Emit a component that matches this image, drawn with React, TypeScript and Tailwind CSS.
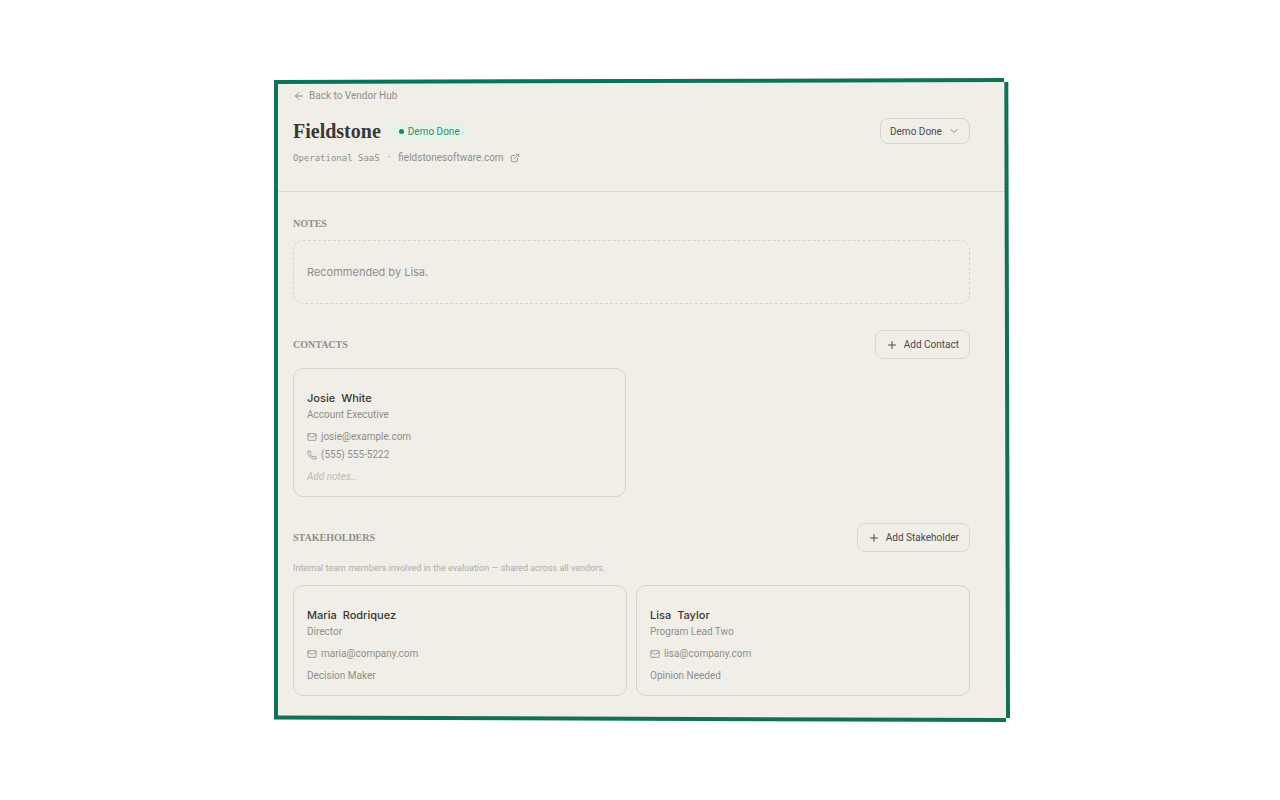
import { useState } from 'react';
import { ArrowLeft, ChevronDown, ExternalLink, Mail, Phone, Plus } from 'lucide-react';

interface Person {
  first: string;
  last: string;
  role: string;
  email: string;
  phone?: string;
  involvement?: string;
}

const contacts: Person[] = [
  {
    first: 'Josie',
    last: 'White',
    role: 'Account Executive',
    email: 'josie@example.com',
    phone: '(555) 555-5222',
  },
];

const stakeholders: Person[] = [
  {
    first: 'Maria',
    last: 'Rodriquez',
    role: 'Director',
    email: 'maria@company.com',
    involvement: 'Decision Maker',
  },
  {
    first: 'Lisa',
    last: 'Taylor',
    role: 'Program Lead Two',
    email: 'lisa@company.com',
    involvement: 'Opinion Needed',
  },
];

const statuses = ['Demo Done', 'Evaluating', 'Selected'];

function SectionTitle({ children }: { children: string }) {
  return (
    <h2 className="font-['Liberation_Serif',serif] text-[10px] leading-4 font-bold text-[#8f8e89] uppercase">
      {children}
    </h2>
  );
}

function AddButton({ label }: { label: string }) {
  return (
    <button className="flex h-[29px] items-center gap-1.5 rounded-lg border border-[#d9d6d0] px-2.5 text-[10px] text-[#4a4a47]">
      <Plus className="h-3 w-3" />
      {label}
    </button>
  );
}

function PersonCard({ person }: { person: Person }) {
  return (
    <article className="rounded-[10px] border border-[#d5d3cd] px-[13px] pt-5 pb-[11px] text-[10px] leading-4 text-[#8f8e89]">
      <h3 className="flex gap-1.5 font-['Inter',sans-serif] text-[11px] leading-[18px] font-medium text-[#383835]">
        <span>{person.first}</span>
        <span>{person.last}</span>
      </h3>
      <p>{person.role}</p>
      <div className="mt-[5px] mb-[5px]">
        <a href={`mailto:${person.email}`} className="flex h-[18px] items-center gap-1">
          <Mail className="h-2.5 w-2.5" />
          {person.email}
        </a>
        {person.phone && (
          <a href={`tel:${person.phone}`} className="flex h-[18px] items-center gap-1">
            <Phone className="h-2.5 w-2.5" />
            {person.phone}
          </a>
        )}
      </div>
      {person.involvement ? (
        <p>{person.involvement}</p>
      ) : (
        <button className="block text-[#bcbab5] italic">Add notes…</button>
      )}
    </article>
  );
}

// Slightly crooked marker outline around the vendor page
function Frame() {
  return (
    <svg
      className="pointer-events-none absolute inset-0 h-full w-full"
      viewBox="0 0 736 644"
      preserveAspectRatio="none"
      fill="none"
      stroke="#0f7156"
      strokeWidth="4"
      aria-hidden="true"
    >
      <path d="M0 4 L730 2" />
      <path d="M732.3 4 L734 640" />
      <path d="M0 639.5 L732 642" />
      <path d="M2 3 L2 641" />
    </svg>
  );
}

export default function App() {
  const [status, setStatus] = useState('Demo Done');

  return (
    <main className="flex min-h-screen items-center justify-center bg-white pl-1 font-['Roboto',sans-serif]">
      <div className="relative w-full max-w-[736px] py-[3px] pr-1">
        <div className="bg-[#f1eee8]">
          {/* Vendor header */}
          <header className="border-b border-[#dad8d2] pt-2 pr-9 pb-[25px] pl-[19px] text-[#8f8e89]">
            <a href="#vendors" className="flex w-fit items-center gap-1 text-[10px] leading-[14px]">
              <ArrowLeft className="h-3 w-3" />
              Back to Vendor Hub
            </a>
            <div className="mt-[15px] flex h-[26px] items-center justify-between">
              <div className="flex items-center gap-2.5">
                <h1 className="font-['Liberation_Serif',serif] text-xl leading-6 font-bold text-[#383835]">
                  Fieldstone
                </h1>
                <span className="flex h-4 items-center gap-1 rounded-full bg-[#e2f3e9] px-2 text-[10px] text-[#3f8a70]">
                  <span className="h-[5px] w-[5px] rounded-full bg-[#2a7d62]" />
                  {status}
                </span>
              </div>
              <div className="relative">
                <select
                  aria-label="Vendor status"
                  value={status}
                  onChange={e => setStatus(e.target.value)}
                  className="block h-[26px] w-[90px] appearance-none rounded-lg border border-[#d5d3cd] bg-transparent pl-[9px] text-[10px] text-[#4a4a47]"
                >
                  {statuses.map(item => (
                    <option key={item}>{item}</option>
                  ))}
                </select>
                <ChevronDown className="pointer-events-none absolute top-[7px] right-2.5 h-3 w-3" />
              </div>
            </div>
            <div className="mt-1.5 flex h-4 items-center gap-2 text-[10px] leading-4">
              <span className="font-['DejaVu_Sans_Mono',monospace] text-[9px]">Operational SaaS</span>
              <span>·</span>
              <a href="#website" className="flex items-center gap-1.5">
                fieldstonesoftware.com
                <ExternalLink className="h-2.5 w-2.5" />
              </a>
            </div>
          </header>

          <div className="flex flex-col gap-[26px] pt-6 pr-9 pb-[23px] pl-[19px]">
            {/* Notes */}
            <section>
              <SectionTitle>Notes</SectionTitle>
              <div className="mt-2 flex h-16 items-center rounded-[10px] border border-dashed border-[#d5d3cd] px-[13px]">
                <p className="font-['Inter',sans-serif] text-[11px] leading-4 text-[#8f8e89]">Recommended by Lisa.</p>
              </div>
            </section>

            {/* Contacts */}
            <section>
              <div className="flex items-center justify-between">
                <SectionTitle>Contacts</SectionTitle>
                <AddButton label="Add Contact" />
              </div>
              <div className="mt-[9px] grid grid-cols-2 gap-3">
                {contacts.map(person => (
                  <PersonCard key={person.email} person={person} />
                ))}
              </div>
            </section>

            {/* Stakeholders */}
            <section>
              <div className="flex items-center justify-between">
                <SectionTitle>Stakeholders</SectionTitle>
                <AddButton label="Add Stakeholder" />
              </div>
              <p className="mt-2 text-[9px] leading-4 text-[#adaba6]">
                Internal team members involved in the evaluation — shared across all vendors.
              </p>
              <div className="mt-[9px] grid grid-cols-2 gap-[9px]">
                {stakeholders.map(person => (
                  <PersonCard key={person.email} person={person} />
                ))}
              </div>
            </section>
          </div>
        </div>
        <Frame />
      </div>
    </main>
  );
}
